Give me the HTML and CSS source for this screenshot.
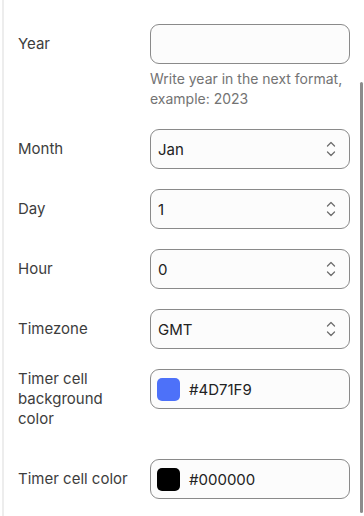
FILE: index.html
```html
<!DOCTYPE html>
<html lang="en">
<head>
    <meta charset="UTF-8">
    <meta name="viewport" content="width=device-width, initial-scale=1.0">
    <title>Timer settings</title>
    <link rel="stylesheet" href="styles.css">
</head>
<body>
    <div class="panel">
        <form class="settings">
            <div class="row">
                <label for="year">Year</label>
                <div class="control">
                    <input type="text" id="year" class="field">
                    <div class="help">Write year in the next format, example: 2023</div>
                </div>
            </div>
            <div class="row">
                <label for="month">Month</label>
                <div class="control select-wrap">
                    <select id="month" class="field">
                        <option>Jan</option>
                    </select>
                    <svg class="chevrons" width="10" height="16" viewBox="0 0 10 16"><path d="M1.5 5 L5 1.5 L8.5 5 M1.5 11 L5 14.5 L8.5 11" fill="none" stroke="#6f6f6f" stroke-width="1.3" stroke-linecap="round" stroke-linejoin="round"/></svg>
                </div>
            </div>
            <div class="row">
                <label for="day">Day</label>
                <div class="control select-wrap">
                    <select id="day" class="field">
                        <option>1</option>
                    </select>
                    <svg class="chevrons" width="10" height="16" viewBox="0 0 10 16"><path d="M1.5 5 L5 1.5 L8.5 5 M1.5 11 L5 14.5 L8.5 11" fill="none" stroke="#6f6f6f" stroke-width="1.3" stroke-linecap="round" stroke-linejoin="round"/></svg>
                </div>
            </div>
            <div class="row">
                <label for="hour">Hour</label>
                <div class="control select-wrap">
                    <select id="hour" class="field">
                        <option>0</option>
                    </select>
                    <svg class="chevrons" width="10" height="16" viewBox="0 0 10 16"><path d="M1.5 5 L5 1.5 L8.5 5 M1.5 11 L5 14.5 L8.5 11" fill="none" stroke="#6f6f6f" stroke-width="1.3" stroke-linecap="round" stroke-linejoin="round"/></svg>
                </div>
            </div>
            <div class="row">
                <label for="timezone">Timezone</label>
                <div class="control select-wrap">
                    <select id="timezone" class="field">
                        <option>GMT</option>
                    </select>
                    <svg class="chevrons" width="10" height="16" viewBox="0 0 10 16"><path d="M1.5 5 L5 1.5 L8.5 5 M1.5 11 L5 14.5 L8.5 11" fill="none" stroke="#6f6f6f" stroke-width="1.3" stroke-linecap="round" stroke-linejoin="round"/></svg>
                </div>
            </div>
            <div class="row row-top">
                <label for="bg-color">Timer cell background color</label>
                <div class="control">
                    <div class="field color-field">
                        <span class="swatch" style="background: #4D71F9;"></span>
                        <span id="bg-color">#4D71F9</span>
                    </div>
                </div>
            </div>
            <div class="row">
                <label for="cell-color">Timer cell color</label>
                <div class="control">
                    <div class="field color-field">
                        <span class="swatch" style="background: #000000;"></span>
                        <span id="cell-color">#000000</span>
                    </div>
                </div>
            </div>
        </form>
        <div class="scrollbar"></div>
    </div>
</body>
</html>
```

FILE: styles.css
```css
body {
    font-family: Inter, "Noto Sans", sans-serif;
    margin: 0;
    padding: 0;
    background-color: #ffffff;
    color: #3a3a3a;
}
.panel {
    position: relative;
    height: 516px;
    margin-left: 2px;
    border-left: 2px solid #ededed;
    overflow: hidden;
}
.settings {
    padding: 24px 14px 0 14px;
}
.row {
    display: flex;
    align-items: flex-start;
    margin-bottom: 20px;
}
.row label {
    width: 115px;
    margin-right: 18px;
    min-height: 40px;
    display: flex;
    align-items: center;
    font-size: 15px;
    line-height: 20px;
    color: #3d3d3d;
}
.row-top label {
    align-items: flex-start;
    padding-bottom: 10px;
}
.control {
    width: 200px;
}
.select-wrap {
    position: relative;
}
.field {
    box-sizing: border-box;
    width: 200px;
    height: 40px;
    margin: 0;
    padding: 0 7px;
    border: 1px solid #8a8a8a;
    border-radius: 9px;
    background: #fcfcfc;
    font-family: Inter, "Noto Sans", sans-serif;
    font-size: 15px;
    color: #222;
    outline: none;
}
select.field {
    appearance: none;
    -webkit-appearance: none;
}
.chevrons {
    position: absolute;
    right: 14px;
    top: 12px;
    pointer-events: none;
}
.help {
    margin-top: 5px;
    font-size: 14px;
    line-height: 20px;
    color: #737373;
}
.color-field {
    display: flex;
    align-items: center;
    padding-left: 6px;
}
.swatch {
    width: 23px;
    height: 23px;
    border-radius: 5px;
    margin-right: 9px;
}
.scrollbar {
    position: absolute;
    right: 1px;
    top: 82px;
    width: 3px;
    height: 431px;
    border-radius: 2px;
    background: #8c8c8c;
}
```
